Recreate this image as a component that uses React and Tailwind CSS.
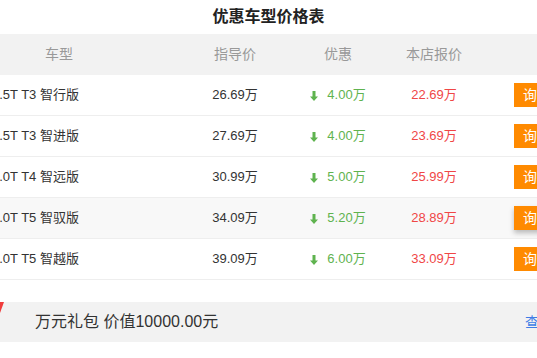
import React from "react";

const rows = [
  { name: "1.5T T3 智行版", guide: "26.69万", off: "4.00万", price: "22.69万" },
  { name: "1.5T T3 智进版", guide: "27.69万", off: "4.00万", price: "23.69万" },
  { name: "2.0T T4 智远版", guide: "30.99万", off: "5.00万", price: "25.99万" },
  { name: "2.0T T5 智驭版", guide: "34.09万", off: "5.20万", price: "28.89万", hover: true },
  { name: "2.0T T5 智越版", guide: "39.09万", off: "6.00万", price: "33.09万" },
];

const DownArrow = () => (
  <svg width="8" height="10" viewBox="0 0 8 10" className="mr-[9px] mt-[1px]">
    <path d="M2.5 0h3v5.5H8L4 10 0 5.5h2.5z" fill="#5fb34f" />
  </svg>
);

const App = () => {
  return (
    <div
      className="w-[537px] h-[358px] overflow-hidden bg-white"
      style={{ fontFamily: '"Liberation Sans", "Noto Sans CJK SC", sans-serif' }}
    >
      <div className="h-[34px] flex items-center justify-center text-[16px] font-bold text-[#222]">
        优惠车型价格表
      </div>

      <div className="ml-[-12px] w-[580px]">
        {/* header */}
        <div className="grid grid-cols-[197px_100px_106px_86px_91px] h-[41px] items-center bg-[#f2f2f2] text-[14px] text-[#999]">
          <div className="pl-[57px]">车型</div>
          <div className="text-center">指导价</div>
          <div className="text-center">优惠</div>
          <div className="text-center">本店报价</div>
          <div />
        </div>

        {rows.map((r) => (
          <div
            key={r.name}
            className={`grid grid-cols-[197px_100px_106px_86px_91px] h-[41px] items-center border-b border-[#eeeeee] text-[13px] ${
              r.hover ? "bg-[#f8f8f8]" : "bg-white"
            }`}
          >
            <div className="pl-[4px] text-[#333]">{r.name}</div>
            <div className="text-center text-[#333]">{r.guide}</div>
            <div className="flex items-center justify-center text-[#5fb34f]">
              <DownArrow />
              {r.off}
            </div>
            <div className="text-center text-[#f04646]">{r.price}</div>
            <div className="pl-[37px]">
              <div
                className={`w-[70px] h-[24px] flex items-center pl-[9px] bg-[#ff8a00] text-white text-[14px] ${
                  r.hover ? "shadow-[0_3px_5px_rgba(0,0,0,0.25)]" : ""
                }`}
              >
                询底价
              </div>
            </div>
          </div>
        ))}
      </div>

      <div className="relative mt-[22px] h-[40px] bg-[#f2f2f2] flex items-center justify-between">
        <svg width="5" height="12" viewBox="0 0 5 12" className="absolute left-0 top-0">
          <polygon points="0,0 4,0 0,11" fill="#f03c3c" />
        </svg>
        <span className="pl-[35px] text-[16px] text-[#333]">万元礼包 价值10000.00元</span>
        <span className="w-[12px] overflow-hidden whitespace-nowrap text-[14px] text-[#3f7de6]">
          查看详情
        </span>
      </div>
    </div>
  );
};

export default App;
